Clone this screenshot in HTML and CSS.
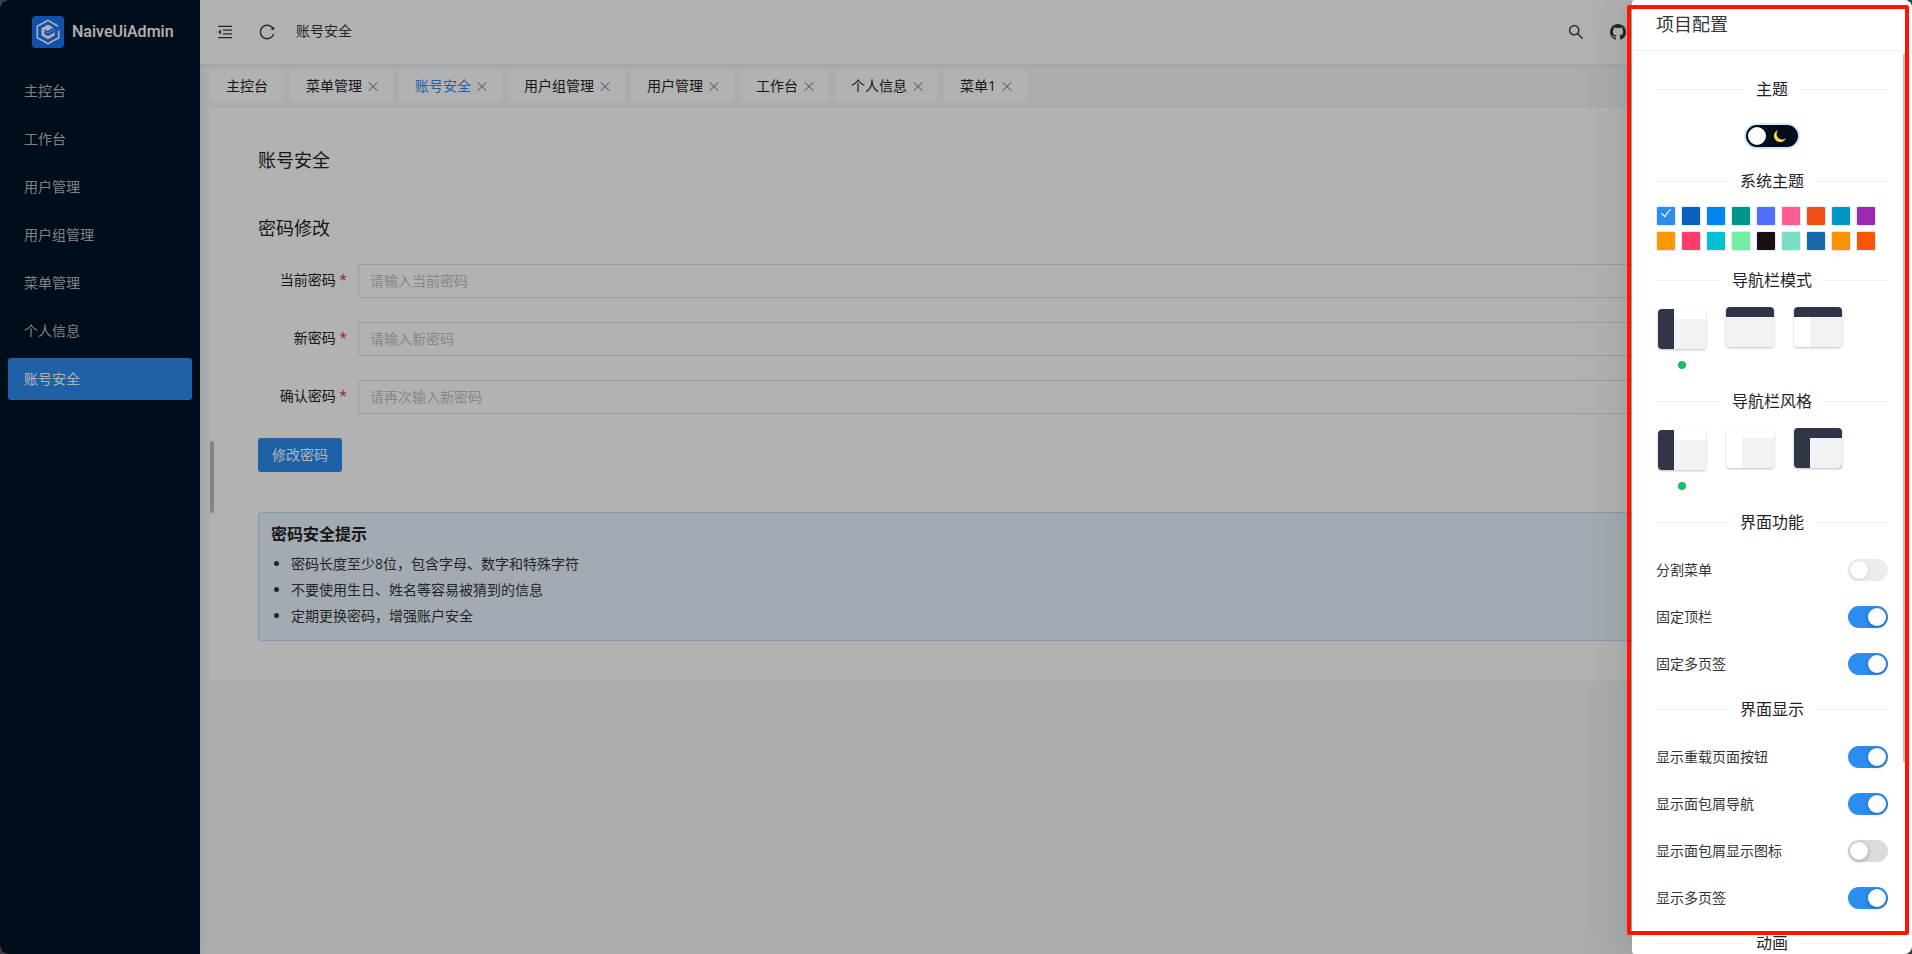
FILE: index.html
```html
<!DOCTYPE html>
<html lang="zh-CN">
<head>
  <meta charset="UTF-8">
  <meta name="viewport" content="width=device-width, initial-scale=1.0">
  <title>NaiveUiAdmin - 账号安全</title>
  <link rel="stylesheet" href="styles.css">
</head>
<body>
  <div class="app">

    <!-- 侧边菜单 -->
    <aside class="sider">
      <div class="logo">
        <svg width="32" height="32" viewBox="0 0 32 32" aria-hidden="true">
          <rect width="32" height="32" rx="4" fill="#1a73f5"/>
          <path d="M26 10.200L16 4.300 5.300 10.300v11.400L16 27.700l10.700-6V14.500" fill="none" stroke="#fff" stroke-width="1.600"/>
          <path d="M16 8.600l5.400 3-5.600 3.300-2.400-1.400-1.700 1 4.200 2.500 6.700-4v6.400L16 23.200l-6.500-3.700v-7.300z" fill="#fff"/>
          <path d="M12.200 15.300l3.700 2.200 6.700-3.900v2.700l-6.700 3.900-3.700-2.200z" fill="#1a73f5"/>
        </svg>
        <span>NaiveUiAdmin</span>
      </div>
      <nav class="menu">
        <a href="#">主控台</a>
        <a href="#">工作台</a>
        <a href="#">用户管理</a>
        <a href="#">用户组管理</a>
        <a href="#">菜单管理</a>
        <a href="#">个人信息</a>
        <a href="#" class="active">账号安全</a>
      </nav>
    </aside>

    <div class="main">
      <!-- 顶栏 -->
      <header class="header">
        <button type="button" class="icon-btn" aria-label="折叠菜单">
          <svg width="18" height="18" viewBox="0 0 1024 1024"><path d="M408 442h480c4.400 0 8-3.600 8-8v-56c0-4.400-3.600-8-8-8H408c-4.400 0-8 3.600-8 8v56c0 4.400 3.600 8 8 8zm-8 204c0 4.400 3.600 8 8 8h480c4.400 0 8-3.600 8-8v-56c0-4.400-3.600-8-8-8H408c-4.400 0-8 3.600-8 8v56zm504-486H120c-4.400 0-8 3.600-8 8v56c0 4.400 3.600 8 8 8h784c4.400 0 8-3.600 8-8v-56c0-4.400-3.600-8-8-8zm0 632H120c-4.400 0-8 3.600-8 8v56c0 4.400 3.600 8 8 8h784c4.400 0 8-3.600 8-8v-56c0-4.400-3.600-8-8-8zM115.400 518.900L271.700 642c5.800 4.600 14.400.5 14.400-6.900V388.900c0-7.400-8.500-11.500-14.400-6.900L115.400 505.100a8.740 8.740 0 0 0 0 13.800z"/></svg>
        </button>
        <button type="button" class="icon-btn" aria-label="重新加载">
          <svg width="18" height="18" viewBox="0 0 1024 1024"><path d="M909.100 209.300l-56.400 44.100C775.800 155.100 656.200 92 521.900 92 290 92 102.300 279.500 102 511.500 101.700 743.700 289.800 932 521.900 932c181.300 0 335.800-115 394.600-276.100 1.500-4.200-.7-8.900-4.900-10.300l-56.700-19.500a8 8 0 0 0-10.100 4.800c-1.800 5-3.800 10-5.900 14.900-17.300 41-42.100 77.800-73.700 109.400A344.770 344.770 0 0 1 655.900 829c-42.300 17.900-87.400 27-133.800 27-46.500 0-91.500-9.100-133.800-27A341.500 341.500 0 0 1 279 755.200a342.160 342.160 0 0 1-73.700-109.400c-17.900-42.400-27-87.400-27-133.900s9.100-91.500 27-133.900c17.300-41 42.100-77.800 73.700-109.400 31.600-31.600 68.400-56.400 109.300-73.800 42.300-17.900 87.400-27 133.800-27 46.500 0 91.500 9.100 133.800 27a341.500 341.500 0 0 1 109.300 73.800c9.900 9.900 19.200 20.400 27.800 31.400l-60.200 47a8 8 0 0 0 3 14.100l175.600 43c5 1.200 9.900-2.600 9.900-7.700l.8-180.900c-.1-6.600-7.800-10.300-13-6.200z"/></svg>
        </button>
        <span class="crumb">账号安全</span>
        <div class="header-right">
          <button type="button" class="icon-btn" aria-label="搜索">
            <svg width="18" height="18" viewBox="0 0 1024 1024"><path d="M909.600 854.500L649.900 594.800C690.200 542.700 712 479 712 412c0-80.200-31.300-155.400-87.900-212.100-56.600-56.700-132-87.900-212.100-87.900s-155.500 31.300-212.100 87.900C143.200 256.500 112 331.800 112 412c0 80.100 31.300 155.500 87.900 212.100C256.500 680.800 331.800 712 412 712c67 0 130.600-21.800 182.700-62l259.700 259.600a8.200 8.200 0 0 0 11.600 0l43.600-43.500a8.200 8.200 0 0 0 0-11.600zM570.400 570.400C528 612.700 471.800 636 412 636s-116-23.300-158.400-65.600C211.300 528 188 471.800 188 412s23.300-116.100 65.600-158.400C296 211.300 352.200 188 412 188s116.100 23.200 158.400 65.600S636 352.200 636 412s-23.300 116.100-65.600 158.400z"/></svg>
          </button>
          <button type="button" class="icon-btn" aria-label="GitHub">
            <svg width="16" height="16" viewBox="0 0 16 16"><path d="M8 0C3.580 0 0 3.580 0 8c0 3.540 2.290 6.530 5.470 7.590.4.07.55-.17.55-.38 0-.19-.01-.82-.01-1.490-2.010.37-2.530-.49-2.690-.94-.09-.23-.48-.94-.82-1.130-.28-.15-.68-.52-.01-.53.63-.01 1.080.58 1.230.82.72 1.210 1.870.87 2.330.66.07-.52.28-.87.51-1.070-1.780-.2-3.640-.89-3.640-3.950 0-.87.31-1.590.82-2.150-.08-.2-.36-1.020.08-2.120 0 0 .67-.21 2.200.82.64-.18 1.320-.27 2-.27s1.360.09 2 .27c1.530-1.040 2.200-.82 2.200-.82.44 1.100.16 1.920.08 2.120.51.56.82 1.270.82 2.150 0 3.070-1.870 3.750-3.650 3.950.29.25.54.73.54 1.480 0 1.070-.01 1.930-.01 2.200 0 .21.15.46.55.38A8.010 8.010 0 0 0 16 8c0-4.420-3.580-8-8-8z"/></svg>
          </button>
        </div>
      </header>

      <!-- 多页签 -->
      <div class="tabs">
        <div class="tab">主控台</div>
        <div class="tab closable">菜单管理<button type="button" aria-label="关闭菜单管理"></button></div>
        <div class="tab closable active">账号安全<button type="button" aria-label="关闭账号安全"></button></div>
        <div class="tab closable">用户组管理<button type="button" aria-label="关闭用户组管理"></button></div>
        <div class="tab closable">用户管理<button type="button" aria-label="关闭用户管理"></button></div>
        <div class="tab closable">工作台<button type="button" aria-label="关闭工作台"></button></div>
        <div class="tab closable">个人信息<button type="button" aria-label="关闭个人信息"></button></div>
        <div class="tab closable">菜单1<button type="button" aria-label="关闭菜单1"></button></div>
      </div>

      <!-- 账号安全 -->
      <section class="card">
        <span class="drag-bar"></span>
        <h1>账号安全</h1>
        <h2>密码修改</h2>
        <form>
          <div class="form-item">
            <label for="oldPwd">当前密码 <i>*</i></label>
            <input type="password" id="oldPwd" placeholder="请输入当前密码">
          </div>
          <div class="form-item">
            <label for="newPwd">新密码 <i>*</i></label>
            <input type="password" id="newPwd" placeholder="请输入新密码">
          </div>
          <div class="form-item">
            <label for="confirmPwd">确认密码 <i>*</i></label>
            <input type="password" id="confirmPwd" placeholder="请再次输入新密码">
          </div>
          <button type="button" class="submit">修改密码</button>
        </form>
        <div class="alert">
          <h3>密码安全提示</h3>
          <ul>
            <li>密码长度至少8位，包含字母、数字和特殊字符</li>
            <li>不要使用生日、姓名等容易被猜到的信息</li>
            <li>定期更换密码，增强账户安全</li>
          </ul>
        </div>
      </section>
    </div>

    <div class="mask"></div>

    <!-- 项目配置抽屉 -->
    <aside class="drawer">
      <div class="drawer-header">项目配置</div>
      <div class="drawer-body">
        <div class="divider">主题</div>
        <label class="dark-switch">
          <input type="checkbox" aria-label="深色主题">
          <svg width="14" height="14" viewBox="0 0 14 14" aria-hidden="true"><path d="M5.200 1A6.200 6.200 0 1 0 13 8.900 5.400 5.400 0 0 1 5.200 1z" fill="#ffd93b"/></svg>
        </label>

        <div class="divider">系统主题</div>
        <div class="colors">
          <button type="button" class="c1" aria-label="#2d8cf0"><svg width="12" height="12" viewBox="0 0 12 12"><path d="M1.500 6.200l3.300 3.300 5.700-7.500" fill="none" stroke="#fff" stroke-width="1.200"/></svg></button>
          <button type="button" class="c2" aria-label="#0960bd"></button>
          <button type="button" class="c3" aria-label="#0084f4"></button>
          <button type="button" class="c4" aria-label="#009688"></button>
          <button type="button" class="c5" aria-label="#536dfe"></button>
          <button type="button" class="c6" aria-label="#ff5c93"></button>
          <button type="button" class="c7" aria-label="#ee4f12"></button>
          <button type="button" class="c8" aria-label="#0096c7"></button>
          <button type="button" class="c9" aria-label="#9c27b0"></button>
          <button type="button" class="c10" aria-label="#ff9800"></button>
          <button type="button" class="c11" aria-label="#ff3d68"></button>
          <button type="button" class="c12" aria-label="#00c1d4"></button>
          <button type="button" class="c13" aria-label="#71efa3"></button>
          <button type="button" class="c14" aria-label="#171010"></button>
          <button type="button" class="c15" aria-label="#78dec7"></button>
          <button type="button" class="c16" aria-label="#1768ac"></button>
          <button type="button" class="c17" aria-label="#fb9300"></button>
          <button type="button" class="c18" aria-label="#fc5404"></button>
        </div>

        <div class="divider">导航栏模式</div>
        <div class="layouts">
          <button type="button" class="selected" aria-label="左侧菜单模式">
            <svg width="52" height="46" viewBox="0 0 52 46">
              <rect x="2" y="3" width="48" height="40" rx="4" fill="#fff"/>
              <path d="M18 13h32v26a4 4 0 0 1-4 4H18z" fill="#f0f2f5"/>
              <path d="M6 3h12v40H6a4 4 0 0 1-4-4V7a4 4 0 0 1 4-4z" fill="#303648"/>
            </svg>
          </button>
          <button type="button" aria-label="顶部菜单模式">
            <svg width="52" height="46" viewBox="0 0 52 46">
              <rect x="2" y="1" width="48" height="40" rx="4" fill="#f0f2f5"/>
              <path d="M6 1h40a4 4 0 0 1 4 4v6H2V5a4 4 0 0 1 4-4z" fill="#303648"/>
            </svg>
          </button>
          <button type="button" aria-label="顶部菜单混合模式">
            <svg width="52" height="46" viewBox="0 0 52 46">
              <rect x="2" y="1" width="48" height="40" rx="4" fill="#fff"/>
              <path d="M18 11h32v26a4 4 0 0 1-4 4H18z" fill="#f0f2f5"/>
              <path d="M6 1h40a4 4 0 0 1 4 4v6H2V5a4 4 0 0 1 4-4z" fill="#303648"/>
            </svg>
          </button>
        </div>

        <div class="divider">导航栏风格</div>
        <div class="layouts">
          <button type="button" class="selected" aria-label="暗色侧边栏">
            <svg width="52" height="46" viewBox="0 0 52 46">
              <rect x="2" y="3" width="48" height="40" rx="4" fill="#fff"/>
              <path d="M18 13h32v26a4 4 0 0 1-4 4H18z" fill="#f0f2f5"/>
              <path d="M6 3h12v40H6a4 4 0 0 1-4-4V7a4 4 0 0 1 4-4z" fill="#303648"/>
            </svg>
          </button>
          <button type="button" aria-label="白色侧边栏">
            <svg width="52" height="46" viewBox="0 0 52 46">
              <rect x="2" y="1" width="48" height="40" rx="4" fill="#fff"/>
              <path d="M18 11h32v26a4 4 0 0 1-4 4H18z" fill="#f0f2f5"/>
            </svg>
          </button>
          <button type="button" aria-label="暗色顶栏">
            <svg width="52" height="46" viewBox="0 0 52 46">
              <rect x="2" y="1" width="48" height="40" rx="4" fill="#303648"/>
              <path d="M18 11h32v26a4 4 0 0 1-4 4H18z" fill="#f0f2f5"/>
            </svg>
          </button>
        </div>

        <div class="divider">界面功能</div>
        <label class="setting">分割菜单<input type="checkbox" disabled></label>
        <label class="setting">固定顶栏<input type="checkbox" checked></label>
        <label class="setting">固定多页签<input type="checkbox" checked></label>

        <div class="divider">界面显示</div>
        <label class="setting">显示重载页面按钮<input type="checkbox" checked></label>
        <label class="setting">显示面包屑导航<input type="checkbox" checked></label>
        <label class="setting">显示面包屑显示图标<input type="checkbox"></label>
        <label class="setting">显示多页签<input type="checkbox" checked></label>

        <div class="divider">动画</div>
      </div>
      <span class="scrollbar"></span>
    </aside>

    <div class="highlight"></div>
  </div>
</body>
</html>
```
FILE: styles.css
```css
* {
  box-sizing: border-box;
}

html {
  background: #3c3c3c;
}

body {
  margin: 0;
  font-family: 'Open Sans', 'Noto Sans CJK SC', sans-serif;
  font-size: 14px;
  line-height: 22px;
  color: #333639;
}

button, input {
  font-family: inherit;
  font-size: 14px;
}

button {
  padding: 0;
  border: none;
  background: none;
  cursor: pointer;
}

h1, h2, h3, ul {
  margin: 0;
  padding: 0;
}

svg {
  display: block;
}

.app {
  position: relative;
  display: flex;
  height: 100vh;
  overflow: hidden;
  border-radius: 8px;
  background: #f5f7f9;
}

/* 侧边菜单 */
.sider {
  width: 200px;
  flex-shrink: 0;
  background: #001428;
  box-shadow: 2px 0 8px rgba(29, 35, 41, 0.05);
}

.logo {
  display: flex;
  align-items: center;
  gap: 8px;
  height: 64px;
  padding-left: 32px;
  font-family: Roboto, sans-serif;
  font-size: 16px;
  font-weight: 500;
  color: #fff;
}

.menu {
  display: flex;
  flex-direction: column;
  gap: 6px;
  padding: 6px 8px;
}

.menu a {
  height: 42px;
  padding-left: 16px;
  line-height: 42px;
  border-radius: 3px;
  color: #bbb;
  text-decoration: none;
}

.menu a.active {
  background: #2d8cf0;
  color: #fff;
}

.main {
  flex: 1;
  min-width: 0;
}

/* 顶栏 */
.header {
  display: flex;
  align-items: center;
  height: 64px;
  padding-left: 4px;
  background: #fff;
  box-shadow: 0 1px 4px rgba(0, 21, 41, 0.08);
}

.icon-btn {
  display: flex;
  align-items: center;
  justify-content: center;
  width: 42px;
  height: 64px;
}

.icon-btn svg {
  fill: #333639;
}

.crumb {
  margin-left: 8px;
  padding-bottom: 2px;
}

.header-right {
  display: flex;
  margin-left: auto;
  padding-right: 273px;
}

/* 多页签 */
.tabs {
  display: flex;
  gap: 6px;
  padding: 6px 10px;
}

.tab {
  display: flex;
  align-items: center;
  height: 32px;
  padding: 0 16px;
  border-radius: 3px;
  background: #fff;
  color: #1f2225;
}

.tab.closable {
  padding-right: 13px;
}

.tab.active {
  color: #2d8cf0;
}

.tab button {
  position: relative;
  width: 14px;
  height: 14px;
  margin-left: 4px;
}

.tab button::before,
.tab button::after {
  content: '';
  position: absolute;
  top: 7px;
  left: 1px;
  width: 12px;
  height: 1px;
  background: #808695;
  transform: rotate(45deg);
}

.tab button::after {
  transform: rotate(-45deg);
}

/* 内容卡片 */
.card {
  position: relative;
  margin: 0 10px;
  padding: 38px 48px 40px;
  border-radius: 3px;
  background: #fff;
}

.drag-bar {
  position: absolute;
  top: 333px;
  left: 0;
  width: 4px;
  height: 72px;
  border-radius: 2px;
  background: #bdbdbd;
}

.card h1,
.card h2 {
  font-size: 18px;
  font-weight: 400;
  line-height: 28px;
  color: #1f2225;
}

.card h2 {
  margin: 40px 0 22px;
}

.form-item {
  display: flex;
  align-items: center;
  margin-bottom: 24px;
}

.form-item label {
  width: 100px;
  padding: 0 11px 2px 0;
  text-align: right;
  color: #1f2225;
}

.form-item i {
  font-style: normal;
  color: #d03050;
}

.form-item input {
  flex: 1;
  height: 34px;
  padding: 0 11px 2px;
  border: 1px solid #e0e0e6;
  border-radius: 3px;
  background: #fff;
}

.form-item input::placeholder {
  color: #c2c2c2;
}

.submit {
  width: 84px;
  height: 34px;
  padding-bottom: 2px;
  border-radius: 3px;
  background: #2d8cf0;
  color: #fff;
}

.alert {
  margin-top: 40px;
  padding: 9px 12px 11px;
  border: 1px solid #c0dcfa;
  border-radius: 3px;
  background: #eaf4fe;
}

.alert h3 {
  font-size: 16px;
  font-weight: 700;
  line-height: 24px;
  color: #1f2225;
}

.alert ul {
  margin-top: 5px;
  padding-left: 20px;
}

.alert li {
  line-height: 26px;
}

.mask {
  position: absolute;
  inset: 0;
  background: rgba(0, 0, 0, 0.3);
}

/* 抽屉 */
.drawer {
  position: absolute;
  top: 0;
  right: 0;
  bottom: 0;
  width: 280px;
  overflow: hidden;
  border-radius: 3px;
  background: #fff;
  box-shadow: -6px 0 16px -9px rgba(0, 0, 0, 0.08), -9px 0 28px 0 rgba(0, 0, 0, 0.05), -12px 0 48px 16px rgba(0, 0, 0, 0.03);
}

.drawer-header {
  height: 51px;
  padding-left: 24px;
  font-size: 18px;
  line-height: 48px;
  border-bottom: 1px solid #efeff5;
}

.drawer-body {
  padding: 14px 24px 0;
}

.divider {
  display: flex;
  align-items: center;
  gap: 12px;
  height: 24px;
  margin: 12px 0;
  font-size: 16px;
  color: #1f2225;
}

.divider::before,
.divider::after {
  content: '';
  flex: 1;
  height: 1px;
  background: #efeff5;
}

.dark-switch {
  position: relative;
  display: block;
  width: 52px;
  margin: 24px auto 22px;
}

.dark-switch svg {
  position: absolute;
  top: 4px;
  right: 11px;
}

input[type="checkbox"] {
  appearance: none;
  display: block;
  width: 40px;
  height: 22px;
  margin: 0;
  padding: 2px;
  border-radius: 11px;
  background: #dbdbdb;
}

input[type="checkbox"]::before {
  content: '';
  display: block;
  width: 18px;
  height: 18px;
  border-radius: 50%;
  background: #fff;
  box-shadow: 0 1px 4px rgba(0, 0, 0, 0.3);
}

input[type="checkbox"]:checked {
  background: #2d8cf0;
}

input[type="checkbox"]:checked::before {
  margin-left: auto;
}

input[type="checkbox"]:disabled {
  opacity: 0.5;
}

.dark-switch input[type="checkbox"] {
  width: 52px;
  background: #000e1c;
  box-shadow: 0 0 0 2px #d5e8fc;
}

.colors {
  display: flex;
  flex-wrap: wrap;
  gap: 5px;
  padding-top: 1px;
}

.colors button {
  width: 20px;
  height: 20px;
  border: 1px solid #e8eaec;
  border-radius: 2px;
}

.colors svg {
  margin: -6px auto 0;
}

.c1 { background: #2d8cf0; }
.c2 { background: #0960bd; }
.c3 { background: #0084f4; }
.c4 { background: #009688; }
.c5 { background: #536dfe; }
.c6 { background: #ff5c93; }
.c7 { background: #ee4f12; }
.c8 { background: #0096c7; }
.c9 { background: #9c27b0; }
.c10 { background: #ff9800; }
.c11 { background: #ff3d68; }
.c12 { background: #00c1d4; }
.c13 { background: #71efa3; }
.c14 { background: #171010; }
.c15 { background: #78dec7; }
.c16 { background: #1768ac; }
.c17 { background: #fb9300; }
.c18 { background: #fc5404; }

.colors + .divider {
  margin-top: 17px;
}

.layouts {
  display: flex;
  align-items: flex-start;
  gap: 16px;
  height: 72px;
}

.layouts svg {
  margin-top: 2px;
  filter: drop-shadow(0 1px 1px rgba(0, 0, 0, 0.25));
}

.layouts .selected::after {
  content: '';
  display: block;
  width: 8px;
  height: 8px;
  margin: 9px auto 0;
  border-radius: 50%;
  background: #19be6b;
}

.layouts + .divider {
  margin-top: 13px;
}

.setting {
  display: flex;
  align-items: center;
  justify-content: space-between;
  height: 47px;
}

.setting + .divider {
  margin-top: 10px;
}

.scrollbar {
  position: absolute;
  top: 53px;
  right: 4px;
  width: 5px;
  height: 710px;
  border-radius: 5px;
  background: #bfbfbf;
}

/* 高亮抽屉区域 */
.highlight {
  position: absolute;
  top: 5px;
  right: 3px;
  bottom: 19px;
  width: 282px;
  border: 4px solid #ff1400;
  border-radius: 2px;
  pointer-events: none;
}
```
